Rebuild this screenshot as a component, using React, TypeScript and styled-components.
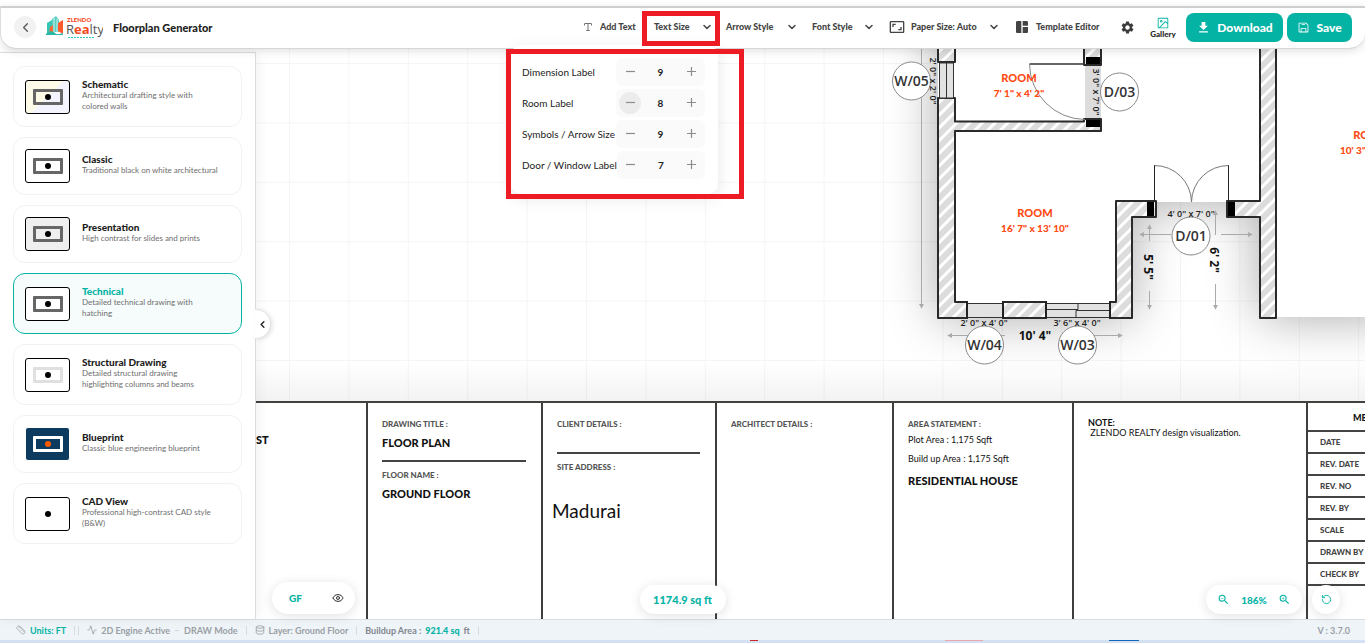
import React from "react";
import styled, { createGlobalStyle, css } from "styled-components";
import { Activity, ChevronLeft, Database, Eye, RotateCcw, Ruler } from "lucide-react";
import { FiChevronDown } from "react-icons/fi";
import {
  MdFileDownload,
  MdOutlineAspectRatio,
  MdSettings,
  MdSpaceDashboard,
  MdZoomIn,
  MdZoomOut,
} from "react-icons/md";
import { PiFloppyDisk, PiImageSquare, PiTextT } from "react-icons/pi";

const teal = "#05b3a4";
const red = "#ed1c24";
const ui = `Lato, "Open Sans", sans-serif`;

const GlobalStyle = createGlobalStyle`
  * { box-sizing: border-box; }
  body { margin: 0; background: #fff; font-family: ${ui}; color: #222; }
  button { font-family: inherit; border: 0; padding: 0; background: none; color: inherit; cursor: pointer; }
  h1, h2, h3, p { margin: 0; }
`;

const Page = styled.div`
  display: flex;
  flex-direction: column;
  min-height: 100vh;
  padding-top: 6px;
  overflow: hidden;
`;

/* ---------- header ---------- */

const Header = styled.header`
  position: relative;
  z-index: 5;
  display: flex;
  align-items: center;
  height: 43px;
  padding: 0 13px 2px 13px;
  background: #fff;
  border-top: 2px solid #cfcfcf;
  border-bottom: 1px solid #d6d6d6;
  border-left: 1px solid #dedede;
  border-radius: 0 0 16px 16px;
  box-shadow: 0 2px 8px rgba(0, 0, 0, 0.12);
`;

const BackButton = styled.button`
  display: grid;
  place-items: center;
  width: 22px;
  height: 22px;
  border-radius: 50%;
  background: #f2f2f2;
  color: #555;
`;

const Logo = styled.svg`
  margin-left: 10px;
`;

const Title = styled.h1`
  margin-left: 10px;
  flex: 1;
  font-size: 11px;
  font-weight: 900;
  white-space: nowrap;
`;

const Tools = styled.nav`
  display: flex;
  align-items: center;
`;

const ToolGroup = styled.div`
  display: flex;
  align-items: center;
  gap: 14px;
`;

const Tool = styled.button<{ $width: number }>`
  display: flex;
  align-items: center;
  gap: 6px;
  width: ${(p) => p.$width}px;
  font-size: 9px;
  font-weight: 900;
  line-height: 12px;
  color: #444;
  white-space: nowrap;
`;

const ToolLabel = styled.span`
  flex: 1;
  text-align: left;
`;

const SettingsButton = styled.button`
  display: grid;
  color: #3c3c3c;
`;

const GalleryButton = styled.button`
  display: flex;
  flex-direction: column;
  align-items: center;
  width: 28px;
  margin: 0 5px 0 14px;
  font-size: 8px;
  font-weight: 900;
  line-height: 9px;
  svg { color: ${teal}; }
`;

const Primary = styled.button<{ $width: number }>`
  display: flex;
  align-items: center;
  justify-content: center;
  gap: 6px;
  width: ${(p) => p.$width}px;
  height: 29px;
  margin-left: 4px;
  border-radius: 8px;
  background: ${teal};
  color: #fff;
  font-size: 12px;
  font-weight: 900;
`;

const MenuAnchor = styled.div`
  position: relative;
  display: flex;
  align-items: center;
  height: 35px;
  width: 78px;
  margin: 0 6px 0 4px;
  padding-left: 12px;
`;

const Marker = styled.div<{ $area: "button" | "menu" }>`
  position: absolute;
  z-index: 3;
  border: 5px solid ${red};
  pointer-events: none;
  ${(p) =>
    p.$area === "button"
      ? css`
          inset: 1px 0 -1px;
        `
      : css`
          top: 39px;
          left: -136px;
          width: 238px;
          height: 150px;
        `}
`;

const Menu = styled.div`
  position: absolute;
  z-index: 2;
  top: 35px;
  left: -131px;
  display: flex;
  flex-direction: column;
  gap: 3px;
  width: 207px;
  height: 149px;
  padding: 13px 13px 0 11px;
  background: #fff;
  border-radius: 10px;
  box-shadow: 0 4px 16px rgba(0, 0, 0, 0.1);
`;

const SizeRow = styled.div`
  display: flex;
  align-items: center;
  justify-content: space-between;
  font-size: 10px;
  line-height: 14px;
  color: #222;
  white-space: nowrap;
`;

const Stepper = styled.div`
  display: flex;
  align-items: center;
  justify-content: space-between;
  width: 89px;
  height: 28px;
  padding: 0 3px;
  border-radius: 6px;
  background: #fafafa;
`;

const Step = styled.button<{ $active?: boolean }>`
  display: grid;
  place-items: center;
  width: 22px;
  height: 22px;
  border-radius: 50%;
  background: ${(p) => (p.$active ? "#ececec" : "transparent")};
`;

const StepValue = styled.output`
  font-size: 10px;
  font-weight: 700;
`;

/* ---------- body ---------- */

const Workspace = styled.div`
  position: relative;
  flex: 1;
  display: flex;
`;

const Sidebar = styled.aside`
  position: relative;
  z-index: 2;
  flex: none;
  display: flex;
  flex-direction: column;
  gap: 10px;
  width: 256px;
  margin-top: 3px;
  padding: 13px 13px;
  background: #fff;
  border-top: 1px solid #dcdcdc;
  border-right: 1px solid #dcdcdc;
  box-shadow: 2px 0 12px rgba(0, 0, 0, 0.06);
`;

const Card = styled.button<{ $active?: boolean }>`
  display: flex;
  align-items: center;
  gap: 12px;
  min-height: 58px;
  padding: 11px;
  border: 1px solid ${(p) => (p.$active ? teal : "#f2f2f2")};
  border-radius: 12px;
  background: ${(p) => (p.$active ? "#f6fcfc" : "#fff")};
  text-align: left;
`;

const CardTitle = styled.h2<{ $active?: boolean }>`
  font-size: 10px;
  line-height: 12px;
  font-weight: 900;
  color: ${(p) => (p.$active ? teal : "#1d1d1d")};
`;

const CardText = styled.p`
  padding-bottom: 3px;
  font-size: 8px;
  line-height: 11px;
  color: #6e6e6e;
  max-width: 137px;
`;

const Thumb = styled.div<{ $bg: string; $frame: string }>`
  flex: none;
  display: grid;
  place-items: center;
  width: 45px;
  height: 34px;
  border: 1px solid ${(p) => p.$frame};
  border-radius: 3px;
  background: ${(p) => p.$bg};
`;

const ThumbWall = styled.div<{ $wall: string; $dot: string }>`
  display: grid;
  place-items: center;
  width: 30px;
  height: 16px;
  border: 3px solid ${(p) => p.$wall};
  border-radius: 1px;
  &::after {
    content: "";
    width: 6px;
    height: 6px;
    border-radius: 50%;
    background: ${(p) => p.$dot};
  }
`;

const Collapse = styled.button`
  position: absolute;
  top: 256px;
  left: 255px;
  display: grid;
  place-items: center;
  width: 16px;
  height: 30px;
  border: 1px solid #e2e2e2;
  border-left: 0;
  border-radius: 0 15px 15px 0;
  background: #fff;
  box-shadow: 2px 1px 4px rgba(0, 0, 0, 0.1);
`;

const Canvas = styled.main`
  flex: 1;
  min-width: 0;
  display: flex;
  flex-direction: column;
  background: #fff;
`;

const Plan = styled.svg`
  display: block;
  width: 100%;
  height: 352px;
  flex: none;
`;

const Sheet = styled.section`
  flex: 1;
  display: grid;
  grid-template-columns: 112fr 175fr 174fr 177fr 180fr 234fr 57fr;
  border-top: 2px solid #41433f;
  background: #fff;
  color: #111;
  overflow: hidden;
`;

const Cell = styled.div`
  min-width: 0;
  padding: 15px 15px 0 14px;
  border-right: 2px solid #3e3e3e;
  white-space: nowrap;
`;

const Caption = styled.h3`
  font-size: 8px;
  line-height: 12px;
  font-weight: 900;
  color: #555;
`;

const Strong = styled.p`
  font-size: 11px;
  line-height: 14px;
  font-weight: 900;
  margin: 6px 0 10px;
`;

const CornerName = styled.p`
  margin: 15px 0 0 -14px;
  font-size: 11px;
  font-weight: 900;
  line-height: 14px;
`;

const Rule = styled.hr<{ $top?: number }>`
  margin: ${(p) => p.$top ?? 0}px 0 7px;
  border: 0;
  border-top: 2px solid #444;
`;

const Line = styled.p`
  font-size: 9px;
  line-height: 19px;
`;

const Address = styled.p`
  margin: 26px 0 0 -5px;
  font-size: 19px;
  line-height: 24px;
`;

const Note = styled.p`
  font-size: 9px;
  line-height: 10px;
`;

const MetaHead = styled.p`
  height: 29px;
  padding-left: 45px;
  font-size: 9px;
  font-weight: 900;
  line-height: 29px;
  border-bottom: 2px solid #444;
`;

const MetaRow = styled.p`
  height: 22px;
  padding-left: 12px;
  border-bottom: 2px solid #444;
  font-size: 8px;
  line-height: 21px;
  font-weight: 900;
  color: #444;
`;

const MetaCell = styled.div`
  min-width: 0;
  overflow: hidden;
  white-space: nowrap;
`;

/* ---------- floating controls ---------- */

const Pill = styled.div<{ $place: "floor" | "area" | "zoom" | "reset" }>`
  position: absolute;
  z-index: 3;
  bottom: 5px;
  display: flex;
  align-items: center;
  justify-content: space-between;
  height: 29px;
  border-radius: 16px;
  background: #fff;
  box-shadow: 0 2px 12px rgba(0, 0, 0, 0.12);
  color: ${teal};
  font-size: 10px;
  font-weight: 900;
  ${(p) =>
    ({
      floor: css`
        left: 272px;
        width: 83px;
        height: 32px;
        padding: 0 11px 0 17px;
      `,
      area: css`
        left: 50%;
        width: 86px;
        transform: translateX(-50%);
        justify-content: center;
        font-size: 11px;
      `,
      zoom: css`
        right: 63px;
        width: 96px;
        padding: 0 11px;
      `,
      reset: css`
        right: 25px;
        width: 28px;
        justify-content: center;
      `,
    })[p.$place]}
`;

const IconButton = styled.button<{ $dark?: boolean }>`
  display: grid;
  color: ${(p) => (p.$dark ? "#333" : teal)};
`;

/* ---------- status bar ---------- */

const Status = styled.footer`
  display: flex;
  align-items: center;
  height: 21px;
  padding: 0 15px 0 16px;
  border-top: 1px solid #d9dee4;
  background: #eff4f8;
  color: #9a9fa5;
  font-size: 9px;
  font-weight: 700;
  white-space: nowrap;
`;

const StatusItem = styled.span<{ $tone?: "teal" | "dark" }>`
  display: flex;
  align-items: center;
  gap: 4px;
  color: ${(p) => (p.$tone === "teal" ? teal : p.$tone === "dark" ? "#80868e" : "inherit")};
  svg { color: #9a9fa5; }
  b { color: ${teal}; }
`;

const Divider = styled.i<{ $double?: boolean }>`
  width: ${(p) => (p.$double ? 5 : 1)}px;
  height: 9px;
  margin: 0 8px;
  border: solid #d6dbe0;
  border-width: 0 ${(p) => (p.$double ? 1 : 0)}px 0 1px;
`;

const Dash = styled.i`
  width: 4px;
  height: 1px;
  margin: 0 5px;
  background: #d0d5da;
`;

const Version = styled.span`
  margin-left: auto;
`;

const Taskbar = styled.div`
  display: grid;
  grid-template-columns: 750fr 8fr 187fr 38fr 126fr 30fr 226fr;
  height: 3px;
  background: #d5e1f2;
`;

const Mark = styled.i<{ $color: string; $column: number }>`
  grid-column: ${(p) => p.$column};
  height: 1px;
  background: ${(p) => p.$color};
`;

type Preset = {
  name: string;
  text: string;
  bg: string;
  wall: string;
  frame?: string;
  dot?: string;
  active?: boolean;
};

const presets: Preset[] = [
  {
    name: "Schematic",
    text: "Architectural drafting style with colored walls",
    bg: "linear-gradient(135deg, #fdfbe8 50%, #f3f4fd 50%)",
    wall: "#666",
  },
  { name: "Classic", text: "Traditional black on white architectural", bg: "#fff", wall: "#666" },
  { name: "Presentation", text: "High contrast for slides and prints", bg: "#efefef", wall: "#666" },
  {
    name: "Technical",
    text: "Detailed technical drawing with hatching",
    bg: "#fff",
    wall: "#666",
    active: true,
  },
  {
    name: "Structural Drawing",
    text: "Detailed structural drawing highlighting columns and beams",
    bg: "#fff",
    wall: "#e0e0e0",
  },
  {
    name: "Blueprint",
    text: "Classic blue engineering blueprint",
    bg: "#0d3a5f",
    wall: "#fff",
    frame: "#fff",
    dot: "#ff5a00",
  },
  {
    name: "CAD View",
    text: "Professional high-contrast CAD style (B&W)",
    bg: "#fff",
    wall: "#fff",
  },
];

const sizes = [
  { label: "Dimension Label", value: 9 },
  { label: "Room Label", value: 8, active: true },
  { label: "Symbols / Arrow Size", value: 9 },
  { label: "Door / Window Label", value: 7 },
];

const Glyph = ({ plus }: { plus?: boolean }) => (
  <svg width="9" height="9" viewBox="0 0 9 9" stroke="#8c8c8c" strokeWidth="1.2">
    <path d={plus ? "M0 4.5H9M4.5 0V9" : "M0 4.5H9"} />
  </svg>
);

const Chevron = () => <FiChevronDown size={12} strokeWidth={3} />;

const BrandLogo = () => (
  <Logo width="57" height="23" viewBox="0 0 57 23" role="img" aria-label="Zlendo Realty">
    <path d="M1 7 6 4v13H1z" fill="#35c4b5" />
    <path d="M6 3 10 0l3 4v12H6z" fill="#5acfc1" />
    <path d="M8 2v14M11 3v13" stroke="#e8fffb" strokeWidth=".8" />
    <path d="m12 7 5-3v14l-5-3z" fill="#ff5a2c" />
    <path d="m4 11 3-2v8l-4 1z" fill="#ff6a35" />
    <path d="M0 18c3-4 7-3 9-1s5 1 8 0v2H0z" fill="#2ab7a7" />
    <text x="21" y="6" fontFamily="Lato" fontSize="6" fontWeight="900" fill="#f24a1d">ZLENDO</text>
    <text x="20" y="18" fontFamily="Open Sans" fontSize="13" fill="#555">
      R<tspan fill="#f24a1d" fontWeight="700">ea</tspan>lty
    </text>
    <path d="M22 21.5h26" stroke="#35c4b5" strokeDasharray="2 1" />
  </Logo>
);

const Tag = ({ x, y, children }: { x: number; y: number; children: string }) => (
  <g>
    <circle cx={x} cy={y} r="19" fill="#fff" stroke="#8a8a8a" />
    <text x={x} y={y + 5} fontSize="14" fontWeight="600" fontFamily="Open Sans" fill="#333" textAnchor="middle">
      {children}
    </text>
  </g>
);

const Opening = ({ x, y, turn, children }: { x: number; y: number; turn?: boolean; children: string }) => (
  <text
    transform={`translate(${x} ${y})${turn ? " rotate(90)" : ""}`}
    fontSize="9"
    fontFamily="Open Sans"
    fill="#222"
    fontWeight="600"
    textAnchor="middle"
  >
    {children}
  </text>
);

const Room = ({ x, y, size }: { x: number; y: number; size: string }) => (
  <g fill="#ff4a14" fontWeight="900" textAnchor="middle" fontFamily="Lato">
    <text x={x} y={y} fontSize="11">ROOM</text>
    <text x={x} y={y + 15} fontSize="10">{size}</text>
  </g>
);

const house = "M938 20H1400V317H1260V202H1132V318H938z";

const FloorPlan = () => (
  <Plan aria-label="Floor plan">
    <defs>
      <pattern id="grid" width="59.4" height="59.4" x="289" y="63" patternUnits="userSpaceOnUse">
        <path d="M.5 0V60M0 .5H60" stroke="#f5f5f5" fill="none" />
      </pattern>
      <pattern id="hatch" width="9" height="9" patternUnits="userSpaceOnUse" patternTransform="rotate(45)">
        <rect width="9" height="9" fill="#fff" />
        <path d="M1 0V9M3 0V9M5 0V9" stroke="#8a8a8a" strokeWidth=".6" />
      </pattern>
      <filter id="soft" filterUnits="userSpaceOnUse" x="800" y="-60" width="700" height="520">
        <feGaussianBlur stdDeviation="26" />
      </filter>
      <linearGradient id="fade" x1="0" y1="0" x2="0" y2="1">
        <stop offset="0" stopColor="#000" stopOpacity="0" />
        <stop offset="1" stopColor="#000" stopOpacity=".05" />
      </linearGradient>
      <marker id="tip" viewBox="0 0 6 6" refX="5" refY="3" markerWidth="5" markerHeight="5" orient="auto-start-reverse">
        <path d="M0 0 6 3 0 6z" fill="#aaa" />
      </marker>
    </defs>
    <g transform="translate(-256 -49)">
      <rect x="256" y="49" width="3000" height="353" fill="url(#grid)" />
      <path d={house} fill="#000" opacity=".34" filter="url(#soft)" />
      <rect x="256" y="362" width="3000" height="40" fill="url(#fade)" />
      <path d={house} fill="#fff" />

      {/* dimension lines */}
      <g stroke="#aaa" fill="none">
        <path d="M921.5 49V308" markerEnd="url(#tip)" />
        <path d="M1005 335.5H948" markerEnd="url(#tip)" />
        <path d="M1090 335.5H1122" markerEnd="url(#tip)" />
        <path d="M1149.5 241V225" markerEnd="url(#tip)" />
        <path d="M1149.5 291V309" markerEnd="url(#tip)" />
        <path d="M1215.5 235V211" markerEnd="url(#tip)" />
        <path d="M1215.5 284V309" markerEnd="url(#tip)" />
        <path d="M1171 234.5H1140" markerEnd="url(#tip)" />
        <path d="M1221 234.5H1252" markerEnd="url(#tip)" />
      </g>

      {/* walls */}
      <g fill="url(#hatch)" stroke="#2a2a2a" strokeWidth="2" strokeLinejoin="round">
        <path d="M938 40H955V62H938z" />
        <path d="M938 98H955V121.5H1084V119H1101V131H955V302H967V318H938z" />
        <path d="M1003 302H1046V318H1003z" />
        <path d="M1110 302H1116V201H1156V217H1132V318H1110z" />
        <path d="M1260 40H1276V318H1260V217H1227V201H1260z" />
        <path d="M1084 40H1101V65H1084z" />
      </g>
      <path d="M1085 66H1101V118H1085z" fill="#dcdcdc" />
      <g fill="#000">
        <path d="M1086 57H1100V64H1086zM1086 120H1100V127H1086zM1147 202H1154V216H1147zM1228 202H1235V216H1228z" />
      </g>

      {/* windows */}
      <g fill="#e2e2e2" stroke="#333">
        <path d="M939.5 63V98H953.5V63zM946.5 63V98" />
        <path d="M967 303.5H1003V317.5H967z" />
        <path d="M1046 303.5H1110V317.5H1046z" />
        <path d="M1046 309.5H1078V303M1076 317V310.5H1110" fill="none" />
      </g>
      <path d="M967 301V319M1003 301V319M1046 301V319M1110 301V319" stroke="#222" strokeWidth="2" />

      {/* doors */}
      <g fill="none">
        <path d="M1029.5 64H1085" stroke="#333" strokeWidth="1.3" />
        <path d="M1029.5 64A56 56 0 0 0 1085 119.5" stroke="#888" />
        <path d="M1154.5 202V165M1228.5 202V165" stroke="#222" />
        <path d="M1154.5 165.5A37 37 0 0 1 1191.5 202A37 37 0 0 1 1228.5 165.5" stroke="#777" />
      </g>

      <Room x={1019} y={82} size={`7' 1" x 4' 2"`} />
      <Room x={1035} y={217} size={`16' 7" x 13' 10"`} />
      <Room x={1371} y={139} size={`10' 3" x 12' 0"`} />

      <Tag x={911.5} y={81}>W/05</Tag>
      <Tag x={1119.5} y={92}>D/03</Tag>
      <Tag x={984.5} y={345}>W/04</Tag>
      <Tag x={1077.5} y={345}>W/03</Tag>
      <Tag x={1191} y={236}>D/01</Tag>

      <Opening x={930} y={81} turn>{`2' 0" x 2' 0"`}</Opening>
      <Opening x={1093} y={92} turn>{`3' 0" x 7' 0"`}</Opening>
      <Opening x={984} y={326}>{`2' 0" x 4' 0"`}</Opening>
      <Opening x={1077} y={326}>{`3' 6" x 4' 0"`}</Opening>
      <Opening x={1191} y={217}>{`4' 0" x 7' 0"`}</Opening>

      <g fontFamily="Open Sans" fontSize="12" fontWeight="700" fill="#111" textAnchor="middle">
        <text x="1035" y="340">{`10' 4"`}</text>
        <text transform="translate(1144 267) rotate(90)">{`5' 5"`}</text>
        <text transform="translate(1210 260) rotate(90)">{`6' 2"`}</text>
      </g>
    </g>
  </Plan>
);

const TitleBlock = () => (
  <Sheet>
    <Cell>
      <CornerName>ST</CornerName>
    </Cell>
    <Cell>
      <Caption>DRAWING TITLE :</Caption>
      <Strong>FLOOR PLAN</Strong>
      <Rule />
      <Caption>FLOOR NAME :</Caption>
      <Strong>GROUND FLOOR</Strong>
    </Cell>
    <Cell>
      <Caption>CLIENT DETAILS :</Caption>
      <Rule $top={22} />
      <Caption>SITE ADDRESS :</Caption>
      <Address>Madurai</Address>
    </Cell>
    <Cell>
      <Caption>ARCHITECT DETAILS :</Caption>
    </Cell>
    <Cell>
      <Caption>AREA STATEMENT :</Caption>
      <Line>Plot Area : 1,175 Sqft</Line>
      <Line>Build up Area : 1,175 Sqft</Line>
      <Strong>RESIDENTIAL HOUSE</Strong>
    </Cell>
    <Cell>
      <Note>
        <b>NOTE:</b>
      </Note>
      <Note>&nbsp;ZLENDO REALTY design visualization.</Note>
    </Cell>
    <MetaCell>
      <MetaHead>META</MetaHead>
      {["DATE", "REV. DATE", "REV. NO", "REV. BY", "SCALE", "DRAWN BY", "CHECK BY"].map((t) => (
        <MetaRow key={t}>{t}</MetaRow>
      ))}
    </MetaCell>
  </Sheet>
);

export default function App() {
  return (
    <Page>
      <GlobalStyle />
      <Header>
        <BackButton aria-label="Back">
          <ChevronLeft size={15} />
        </BackButton>
        <BrandLogo />
        <Title>Floorplan Generator</Title>
        <Tools>
          <Tool $width={56}>
            <PiTextT size={12} />
            <ToolLabel>Add Text</ToolLabel>
          </Tool>
          <MenuAnchor>
            <Tool $width={59}>
              <ToolLabel>Text Size</ToolLabel>
              <Chevron />
            </Tool>
            <Menu>
              {sizes.map((s) => (
                <SizeRow key={s.label}>
                  {s.label}
                  <Stepper>
                    <Step $active={s.active} aria-label={`Decrease ${s.label}`}>
                      <Glyph />
                    </Step>
                    <StepValue>{s.value}</StepValue>
                    <Step aria-label={`Increase ${s.label}`}>
                      <Glyph plus />
                    </Step>
                  </Stepper>
                </SizeRow>
              ))}
            </Menu>
            <Marker $area="button" />
            <Marker $area="menu" />
          </MenuAnchor>
          <ToolGroup>
            <Tool $width={72}>
              <ToolLabel>Arrow Style</ToolLabel>
              <Chevron />
            </Tool>
            <Tool $width={63}>
              <ToolLabel>Font Style</ToolLabel>
              <Chevron />
            </Tool>
            <Tool $width={111}>
              <MdOutlineAspectRatio size={16} />
              <ToolLabel>Paper Size: Auto</ToolLabel>
              <Chevron />
            </Tool>
            <Tool $width={92}>
              <MdSpaceDashboard size={16} />
              <ToolLabel>Template Editor</ToolLabel>
            </Tool>
            <SettingsButton aria-label="Settings">
              <MdSettings size={15} />
            </SettingsButton>
          </ToolGroup>
          <GalleryButton>
            <PiImageSquare size={14} />
            Gallery
          </GalleryButton>
          <Primary $width={97}>
            <MdFileDownload size={15} />
            Download
          </Primary>
          <Primary $width={65}>
            <PiFloppyDisk size={13} />
            Save
          </Primary>
        </Tools>
      </Header>
      <Workspace>
        <Sidebar>
          {presets.map((p) => (
            <Card key={p.name} $active={p.active}>
              <Thumb $bg={p.bg} $frame={p.frame ?? "#000"}>
                <ThumbWall $wall={p.wall} $dot={p.dot ?? "#000"} />
              </Thumb>
              <div>
                <CardTitle $active={p.active}>{p.name}</CardTitle>
                <CardText>{p.text}</CardText>
              </div>
            </Card>
          ))}
          <Collapse aria-label="Collapse panel">
            <ChevronLeft size={11} strokeWidth={3} />
          </Collapse>
        </Sidebar>
        <Canvas>
          <FloorPlan />
          <TitleBlock />
        </Canvas>
        <Pill $place="floor">
          GF
          <IconButton $dark aria-label="Toggle floor visibility">
            <Eye size={12} />
          </IconButton>
        </Pill>
        <Pill $place="area">1174.9 sq ft</Pill>
        <Pill $place="zoom">
          <IconButton aria-label="Zoom out">
            <MdZoomOut size={13} />
          </IconButton>
          186%
          <IconButton aria-label="Zoom in">
            <MdZoomIn size={13} />
          </IconButton>
        </Pill>
        <Pill $place="reset">
          <IconButton aria-label="Reset view">
            <RotateCcw size={11} />
          </IconButton>
        </Pill>
      </Workspace>
      <Status>
        <StatusItem $tone="teal">
          <Ruler size={10} />
          Units: FT
        </StatusItem>
        <Divider $double />
        <StatusItem>
          <Activity size={10} />
          2D Engine Active
        </StatusItem>
        <Dash />
        <StatusItem>DRAW Mode</StatusItem>
        <Divider />
        <StatusItem>
          <Database size={10} />
          Layer: Ground Floor
        </StatusItem>
        <Divider />
        <StatusItem $tone="dark">
          Buildup Area : <b>921.4 sq</b> ft
        </StatusItem>
        <Divider />
        <Version>V : 3.7.0</Version>
      </Status>
      <Taskbar>
        <Mark $column={2} $color="#c62828" />
        <Mark $column={4} $color="#e8a9ae" />
        <Mark $column={6} $color="#1467b8" />
      </Taskbar>
    </Page>
  );
}
